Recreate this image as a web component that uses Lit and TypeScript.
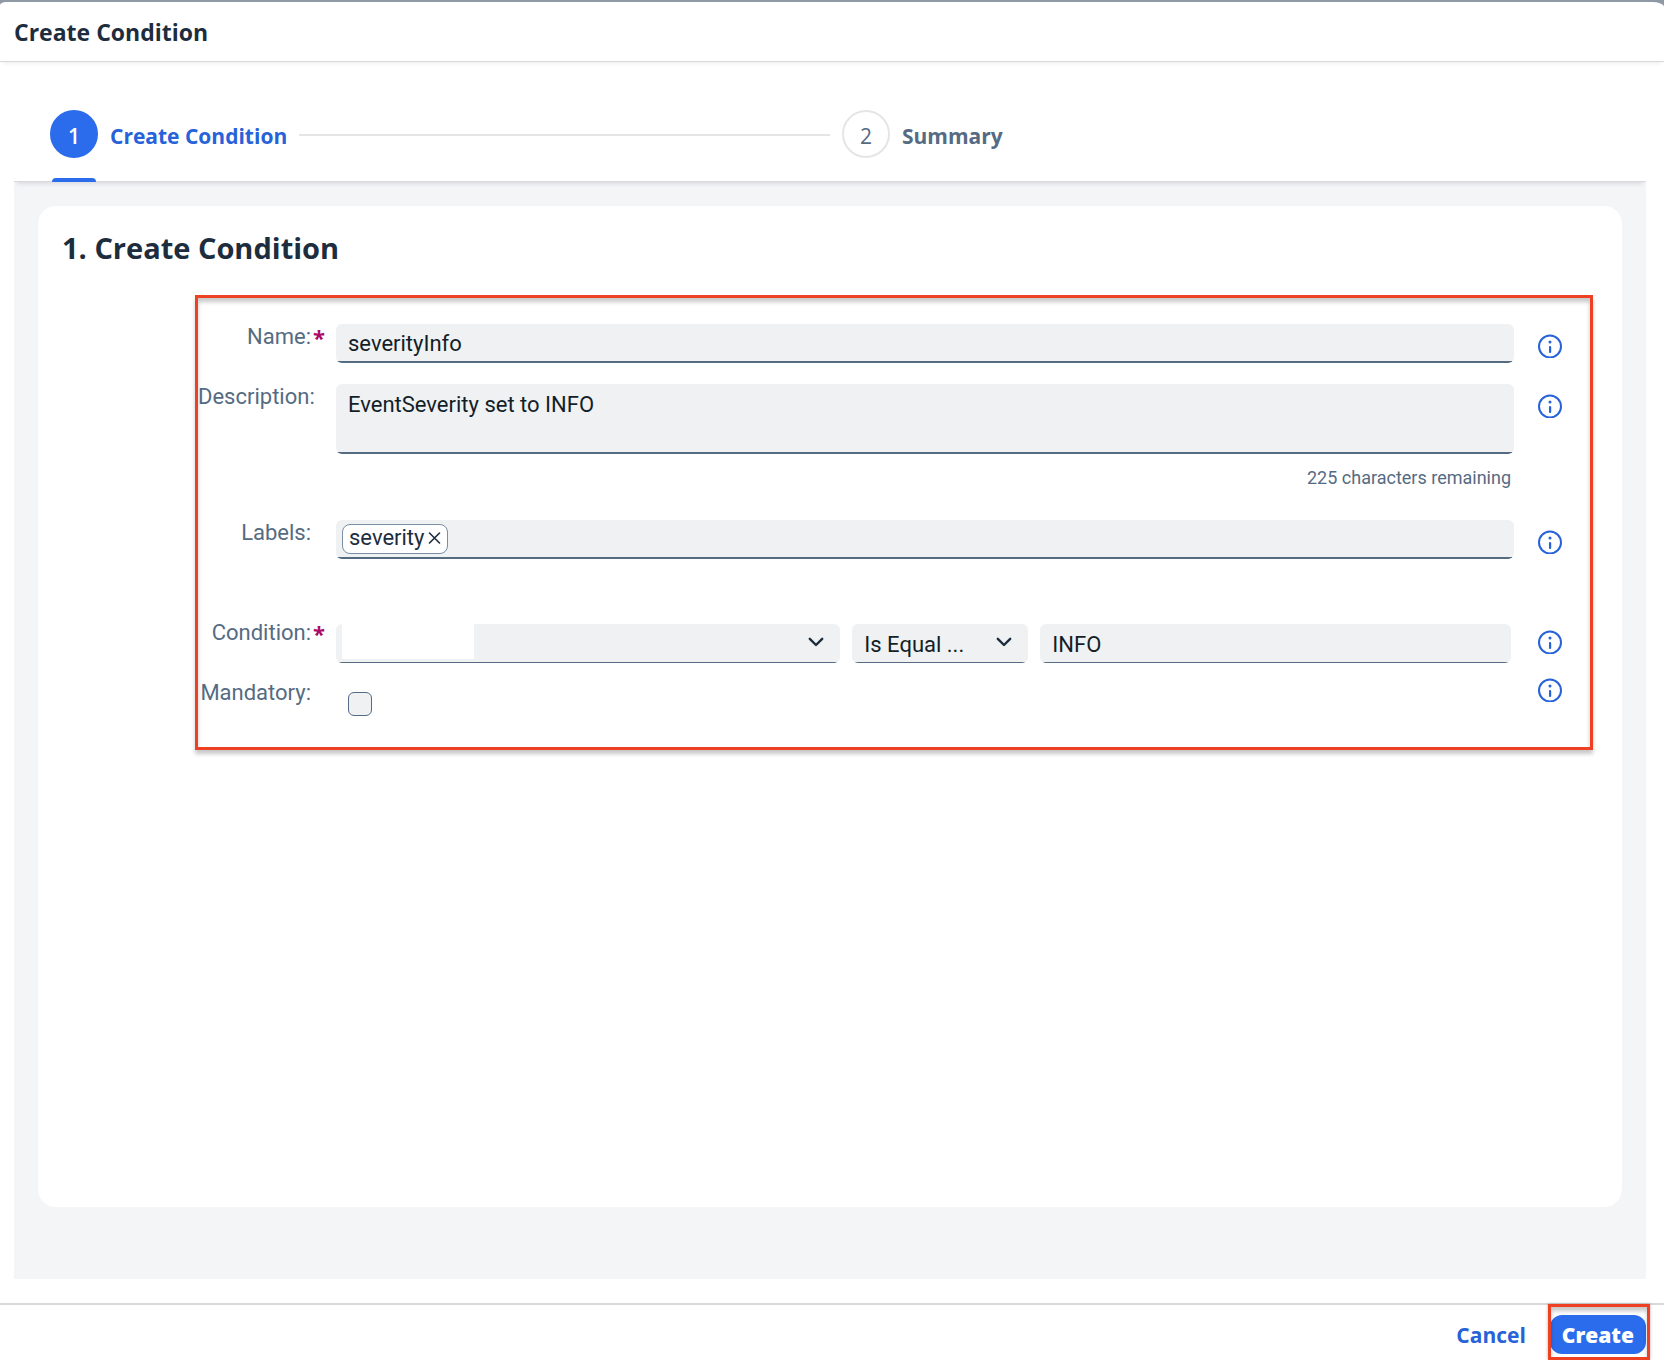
import { LitElement, html, css, svg } from "lit";
import { customElement, property, state } from "lit/decorators.js";

@customElement("info-button")
class InfoButton extends LitElement {
  @property() label = "";

  static styles = css`
    :host {
      display: block;
    }
    .info {
      display: block;
      width: 24px;
      height: 24px;
      padding: 0;
      border: 0;
      background: none;
      color: #2762d8;
      cursor: pointer;
    }
    .glyph {
      display: block;
    }
  `;

  render() {
    return html`
      <button class="info" type="button" aria-label="More information about ${this.label}">
        <svg class="glyph" width="24" height="24" viewBox="0 0 24 24" aria-hidden="true">
          <circle cx="12" cy="12.5" r="11" fill="none" stroke="currentColor" stroke-width="2" />
          <circle cx="12" cy="8" r="1.5" fill="currentColor" />
          <rect x="11" y="12" width="2.2" height="7" rx="1" fill="currentColor" />
        </svg>
      </button>
    `;
  }
}

const chevron = svg`<path d="M1.8 1.8 L8 8 L14.2 1.8" fill="none" stroke="currentColor" stroke-width="2.4" stroke-linecap="round" stroke-linejoin="round" />`;

@customElement("app-root")
class AppRoot extends LitElement {
  @state() private description = "EventSeverity set to INFO";
  @state() private labels = ["severity"];

  static styles = css`
    :host {
      display: block;
      --strong: "Open Sans", "Noto Sans", sans-serif;
      font-family: Roboto, "Liberation Sans", sans-serif;
      font-size: 22px;
      line-height: 24px;
      color: #1d2d3e;
    }
    *,
    *::before,
    *::after {
      box-sizing: border-box;
    }
    .backdrop {
      min-height: 100vh;
      padding-top: 2px;
      background: #8f99a6;
      display: flex;
    }
    .dialog {
      flex: 1;
      display: flex;
      flex-direction: column;
      background: #fff;
      border-radius: 6px 12px 0 0 / 3px 5px 0 0;
    }
    .header {
      height: 60px;
      padding: 0 14px;
      display: flex;
      align-items: center;
      border-bottom: 1px solid #d9d9d9;
      box-shadow: 0 4px 4px -3px rgba(34, 53, 72, 0.1);
    }
    .title {
      margin: 0;
      font-family: var(--strong);
      font-size: 23px;
      line-height: 28px;
      font-weight: 700;
    }
    .body {
      flex: 1;
      display: flex;
      flex-direction: column;
      padding: 0 18px 24px 14px;
    }
    .steps {
      list-style: none;
      margin: 0;
      height: 120px;
      padding: 48px 12px 0 36px;
      display: grid;
      grid-template-columns: 1fr 1fr;
      border-bottom: 1px solid #d9d9d9;
      box-shadow: 0 5px 4px -3px rgba(34, 53, 72, 0.12);
      position: relative;
    }
    .step {
      display: flex;
      align-items: center;
      gap: 12px;
      height: 48px;
      padding-right: 12px;
      color: #556b82;
      font-family: var(--strong);
      font-size: 21px;
      font-weight: 700;
    }
    .bullet {
      flex: none;
      width: 48px;
      height: 48px;
      border: 2px solid #e5e5e5;
      border-radius: 50%;
      display: grid;
      place-items: center;
      font-weight: 400;
      position: relative;
      padding-top: 4px;
    }
    .name {
      padding-top: 4px;
    }
    .rail {
      flex: 1;
      height: 2px;
      margin-top: 2px;
      background: #e5e5e5;
    }
    .step.current {
      color: #2762d8;
    }
    .step.current .bullet {
      background: #2b6cec;
      border-color: #2b6cec;
      color: #fff;
      font-weight: 600;
    }
    .step.current .bullet::after {
      content: "";
      position: absolute;
      left: 0;
      right: 0;
      top: 66px;
      height: 4px;
      border-radius: 4px 4px 0 0;
      background: #2b6cec;
    }
    .page {
      flex: 1;
      display: flex;
      flex-direction: column;
      padding: 24px 24px 72px;
      background: #f4f5f7;
    }
    .card {
      flex: 1;
      padding: 24px 29px 24px 24px;
      border-radius: 18px;
      background: #fff;
    }
    .heading {
      margin: 0 0 29px;
      font-family: var(--strong);
      font-size: 29px;
      line-height: 36px;
      font-weight: 700;
    }
    .form {
      margin-left: 133px;
      padding: 26px 28px 19px 0;
      display: flex;
      flex-direction: column;
      border: 3px solid #ee4023;
      box-shadow: 0 4px 4px rgba(0, 0, 0, 0.22), inset 0 4px 4px rgba(0, 0, 0, 0.22);
    }
    .row {
      display: grid;
      grid-template-columns: 126px minmax(0, 1fr) 24px;
      column-gap: 12px;
      align-items: start;
      min-height: 60px;
    }
    .row.tall {
      min-height: 136px;
    }
    .row.loose {
      min-height: 100px;
    }
    .row.last {
      min-height: 24px;
    }
    .caption {
      display: flex;
      justify-content: flex-end;
      padding-top: 1px;
      color: #556b82;
      white-space: nowrap;
    }
    .mark {
      width: 13px;
      padding-left: 2px;
      color: #aa0c68;
      font-family: var(--strong);
      font-weight: 700;
    }
    .control {
      margin-right: 12px;
      min-width: 0;
    }
    .hint {
      margin-top: 10px;
    }
    .last .hint {
      margin-top: -2px;
    }
    .field {
      display: block;
      width: 100%;
      height: 39px;
      margin: 0;
      padding: 0 12px;
      border: 0;
      border-radius: 6px;
      background: linear-gradient(#556b82, #556b82) bottom / 100% 2px no-repeat #eff1f2;
      color: #131e29;
      font: inherit;
      outline: none;
      appearance: none;
    }
    .field.thin {
      padding-top: 2px;
      background-size: 100% 1px;
    }
    .field.area {
      height: 70px;
      padding: 9px 12px;
      resize: none;
    }
    .counter {
      padding: 12px 3px 0 0;
      text-align: right;
      font-size: 18px;
      color: #556b82;
    }
    .field.tokens {
      display: flex;
      align-items: flex-start;
      padding: 4px 6px;
    }
    .token {
      display: flex;
      align-items: center;
      gap: 4px;
      height: 30px;
      padding: 0 6px 2px;
      border: 1px solid #788fa6;
      border-radius: 8px;
      background: #fff;
      color: #1d2d3e;
    }
    .remove {
      display: block;
      padding: 0;
      border: 0;
      background: none;
      color: inherit;
      cursor: pointer;
    }
    .remove svg {
      display: block;
    }
    .token-input {
      flex: 1;
      min-width: 0;
      border: 0;
      padding: 0 6px;
      background: none;
      font: inherit;
      outline: none;
    }
    .trio {
      display: grid;
      grid-template-columns: 15fr 176px 14fr;
      gap: 12px;
      padding: 4px 3px 0 0;
    }
    .picker {
      position: relative;
      color: #1d2d3e;
    }
    .arrow {
      position: absolute;
      right: 16px;
      top: 13px;
      pointer-events: none;
    }
    .blank {
      position: absolute;
      left: 6px;
      top: 0;
      width: 132px;
      height: 35px;
      background: #fff;
    }
    .check {
      display: block;
      width: 24px;
      height: 24px;
      margin: 12px;
      border: 1px solid #556b82;
      border-radius: 6px;
      background: #eff1f2;
      appearance: none;
    }
    .footer {
      height: 57px;
      padding: 10px 18px 0;
      display: flex;
      justify-content: flex-end;
      align-items: flex-start;
      gap: 12px;
      border-top: 2px solid #d9d9d9;
    }
    .action {
      height: 39px;
      padding: 0 12px;
      border: 0;
      border-radius: 12px;
      background: none;
      color: #2762d8;
      font-family: var(--strong);
      font-size: 21px;
      line-height: 24px;
      font-weight: 700;
      cursor: pointer;
    }
    .action.primary {
      background: #2b6cec;
      color: #fff;
      font-weight: 800;
    }
    .callout {
      position: relative;
    }
    .callout::after {
      content: "";
      position: absolute;
      inset: -11px -4px -6px -2px;
      border: 3px solid #ee4023;
      box-shadow: 0 0 3px rgba(0, 0, 0, 0.3), inset 0 4px 4px rgba(0, 0, 0, 0.22);
      pointer-events: none;
    }
  `;

  private onDescription(e: Event) {
    this.description = (e.target as HTMLTextAreaElement).value;
  }

  private removeLabel(label: string) {
    this.labels = this.labels.filter((l) => l !== label);
  }

  private caption(id: string, text: string, required = false) {
    return html`
      <label class="caption" for=${id}>${text}:<span class="mark">${required ? "*" : ""}</span></label>
    `;
  }

  render() {
    return html`
      <div class="backdrop">
        <div class="dialog" role="dialog" aria-labelledby="dialog-title">
          <header class="header">
            <h1 class="title" id="dialog-title">Create Condition</h1>
          </header>
          <main class="body">
            <ol class="steps">
              <li class="step current" aria-current="step">
                <span class="bullet">1</span>
                <span class="name">Create Condition</span>
                <span class="rail"></span>
              </li>
              <li class="step">
                <span class="bullet">2</span>
                <span class="name">Summary</span>
              </li>
            </ol>
            <section class="page">
              <div class="card">
                <h2 class="heading">1. Create Condition</h2>
                <form class="form">
                  <div class="row">
                    ${this.caption("name", "Name", true)}
                    <div class="control">
                      <input class="field" id="name" type="text" value="severityInfo" />
                    </div>
                    <info-button class="hint" label="Name"></info-button>
                  </div>
                  <div class="row tall">
                    ${this.caption("description", "Description")}
                    <div class="control">
                      <textarea
                        class="field area"
                        id="description"
                        maxlength="250"
                        .value=${this.description}
                        @input=${this.onDescription}
                      ></textarea>
                      <div class="counter">${250 - this.description.length} characters remaining</div>
                    </div>
                    <info-button class="hint" label="Description"></info-button>
                  </div>
                  <div class="row loose">
                    ${this.caption("labels", "Labels")}
                    <div class="control">
                      <div class="field tokens">
                        ${this.labels.map(
                          (label) => html`
                            <span class="token">
                              ${label}
                              <button
                                class="remove"
                                type="button"
                                aria-label="Remove ${label}"
                                @click=${() => this.removeLabel(label)}
                              >
                                <svg width="13" height="13" viewBox="0 0 13 13" aria-hidden="true">
                                  <path
                                    d="M1.5 1 L11.5 11 M11.5 1 L1.5 11"
                                    stroke="currentColor"
                                    stroke-width="1.6"
                                    stroke-linecap="round"
                                  />
                                </svg>
                              </button>
                            </span>
                          `
                        )}
                        <input class="token-input" id="labels" type="text" />
                      </div>
                    </div>
                    <info-button class="hint" label="Labels"></info-button>
                  </div>
                  <div class="row">
                    ${this.caption("condition", "Condition", true)}
                    <div class="control trio">
                      <div class="picker">
                        <select class="field thin" id="condition">
                          <option></option>
                        </select>
                        <span class="blank"></span>
                        <svg class="arrow" width="16" height="10" viewBox="0 0 16 10" aria-hidden="true">
                          ${chevron}
                        </svg>
                      </div>
                      <div class="picker">
                        <select class="field thin" aria-label="Operator">
                          <option>Is Equal ...</option>
                        </select>
                        <svg class="arrow" width="16" height="10" viewBox="0 0 16 10" aria-hidden="true">
                          ${chevron}
                        </svg>
                      </div>
                      <input class="field thin" type="text" aria-label="Value" value="INFO" />
                    </div>
                    <info-button class="hint" label="Condition"></info-button>
                  </div>
                  <div class="row last">
                    ${this.caption("mandatory", "Mandatory")}
                    <div class="control">
                      <input class="check" id="mandatory" type="checkbox" />
                    </div>
                    <info-button class="hint" label="Mandatory"></info-button>
                  </div>
                </form>
              </div>
            </section>
          </main>
          <footer class="footer">
            <button class="action" type="button">Cancel</button>
            <div class="callout">
              <button class="action primary" type="button">Create</button>
            </div>
          </footer>
        </div>
      </div>
    `;
  }
}
